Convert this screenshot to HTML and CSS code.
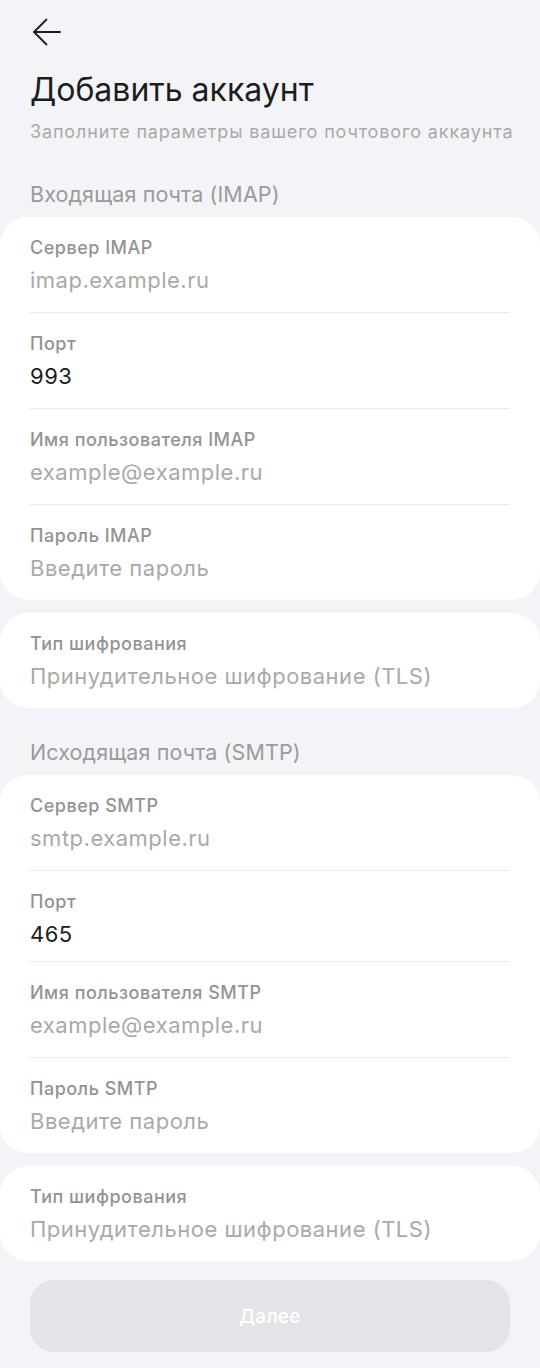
FILE: index.html
```html
<!DOCTYPE html>
<html lang="ru">
<head>
  <meta charset="UTF-8" />
  <meta name="viewport" content="width=device-width, initial-scale=1.0" />
  <title>Добавить аккаунт</title>
  <link rel="stylesheet" href="styles.css">
</head>
<body>
  <header class="top-bar">
    <button class="back-btn" aria-label="Назад">
      <svg width="30" height="28" viewBox="0 0 30 28" fill="none" stroke="#1c1c1e" stroke-width="1.8" stroke-linecap="round" stroke-linejoin="round">
        <path d="M28 14H2" />
        <path d="M14.5 1.5L2 14l12.5 12.5" />
      </svg>
    </button>
  </header>

  <main class="page">
    <h1>Добавить аккаунт</h1>
    <p class="subtitle">Заполните параметры вашего почтового аккаунта</p>

    <h2 class="section-title">Входящая почта (IMAP)</h2>
    <div class="card">
      <div class="field">
        <div class="field-label">Сервер IMAP</div>
        <div class="field-value placeholder">imap.example.ru</div>
      </div>
      <div class="field">
        <div class="field-label">Порт</div>
        <div class="field-value">993</div>
      </div>
      <div class="field">
        <div class="field-label">Имя пользователя IMAP</div>
        <div class="field-value placeholder">example@example.ru</div>
      </div>
      <div class="field">
        <div class="field-label">Пароль IMAP</div>
        <div class="field-value placeholder">Введите пароль</div>
      </div>
    </div>
    <div class="card">
      <div class="field">
        <div class="field-label">Тип шифрования</div>
        <div class="field-value placeholder">Принудительное шифрование (TLS)</div>
      </div>
    </div>

    <h2 class="section-title">Исходящая почта (SMTP)</h2>
    <div class="card">
      <div class="field">
        <div class="field-label">Сервер SMTP</div>
        <div class="field-value placeholder">smtp.example.ru</div>
      </div>
      <div class="field field-short">
        <div class="field-label">Порт</div>
        <div class="field-value">465</div>
      </div>
      <div class="field">
        <div class="field-label">Имя пользователя SMTP</div>
        <div class="field-value placeholder">example@example.ru</div>
      </div>
      <div class="field">
        <div class="field-label">Пароль SMTP</div>
        <div class="field-value placeholder">Введите пароль</div>
      </div>
    </div>
    <div class="card">
      <div class="field">
        <div class="field-label">Тип шифрования</div>
        <div class="field-value placeholder">Принудительное шифрование (TLS)</div>
      </div>
    </div>

    <button class="next-btn" disabled>Далее</button>
  </main>
</body>
</html>
```

FILE: styles.css
```css
:root {
  --bg: #f3f4f7;
  --card-bg: #ffffff;
  --text: #1c1c1e;
  --muted: #a9a9a9;
  --label: #939393;
  --divider: #e9e9eb;
  --btn-disabled: #e2e4e8;
}

* {
  box-sizing: border-box;
  margin: 0;
  padding: 0;
}

body {
  font-family: Inter, 'Noto Sans', sans-serif;
  background: var(--bg);
  color: var(--text);
  min-height: 100vh;
  -webkit-font-smoothing: antialiased;
}

.top-bar {
  height: 62px;
  padding: 18px 0 0 32px;
}

.back-btn {
  background: none;
  border: none;
  display: block;
  cursor: pointer;
}

.page {
  display: flex;
  flex-direction: column;
  padding-bottom: 16px;
}

h1 {
  font-size: 32px;
  font-weight: 400;
  line-height: 40px;
  padding: 8px 30px 0;
}

.subtitle {
  font-size: 18px;
  line-height: 24px;
  letter-spacing: 0.85px;
  white-space: nowrap;
  color: var(--muted);
  padding: 10px 30px 0;
}

.section-title {
  font-size: 21.5px;
  font-weight: 400;
  line-height: 28px;
  letter-spacing: 0.1px;
  color: #9b9b9b;
  padding: 36px 30px 0;
  margin-bottom: 9px;
}

.card {
  background: var(--card-bg);
  border-radius: 28px;
  padding: 0 30px;
}

.card + .card {
  margin-top: 13px;
}

.card + .section-title {
  padding-top: 30px;
}

.field {
  height: 96px;
  padding-top: 19px;
  border-bottom: 1px solid var(--divider);
}

.field:last-child {
  border-bottom: none;
  height: 95px;
}

.field-short {
  height: 91px;
}

.field-label {
  font-size: 18px;
  font-weight: 500;
  line-height: 24px;
  letter-spacing: 0.5px;
  color: var(--label);
}

.field-value {
  font-size: 22px;
  line-height: 30px;
  letter-spacing: 0.5px;
  margin-top: 5px;
  color: var(--text);
}

.field-value.placeholder {
  color: var(--muted);
}

.next-btn {
  margin: 19px 30px 0;
  height: 72px;
  border: none;
  border-radius: 24px;
  background: var(--btn-disabled);
  color: #ffffff;
  font-family: inherit;
  font-size: 19px;
  font-weight: 500;
  letter-spacing: 0.3px;
}
```
